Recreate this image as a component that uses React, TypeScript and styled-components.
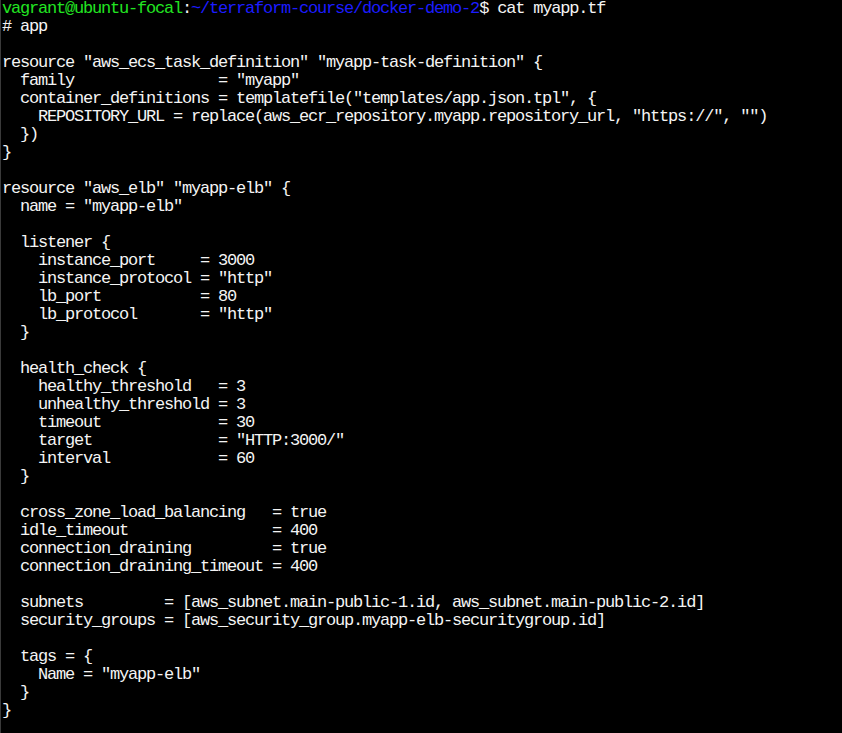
import React from "react";
import styled, { createGlobalStyle } from "styled-components";

const Global = createGlobalStyle`
  html, body { margin: 0; padding: 0; background: #000; }
  #root { min-height: 733px; background: #000; }
`;

const Terminal = styled.div`
  box-sizing: border-box;
  width: 842px;
  height: 733px;
  background: #000;
  border-left: 1px solid #3a3a3a;
  padding: 0 0 0 1px;
  overflow: hidden;
  font-family: "Liberation Mono", "DejaVu Sans Mono", monospace;
  font-size: 17px;
  letter-spacing: -1.2px;
  line-height: 18px;
  color: #f4f4f4;
`;

const Line = styled.div`
  height: 18px;
  white-space: pre;
`;

const Seg = styled.span<{ $tone: "user" | "path" }>`
  color: ${(p) => (p.$tone === "user" ? "#22e422" : "#1c1cff")};
`;

const code = `# app

resource "aws_ecs_task_definition" "myapp-task-definition" {
  family                = "myapp"
  container_definitions = templatefile("templates/app.json.tpl", {
    REPOSITORY_URL = replace(aws_ecr_repository.myapp.repository_url, "https://", "")
  })
}

resource "aws_elb" "myapp-elb" {
  name = "myapp-elb"

  listener {
    instance_port     = 3000
    instance_protocol = "http"
    lb_port           = 80
    lb_protocol       = "http"
  }

  health_check {
    healthy_threshold   = 3
    unhealthy_threshold = 3
    timeout             = 30
    target              = "HTTP:3000/"
    interval            = 60
  }

  cross_zone_load_balancing   = true
  idle_timeout                = 400
  connection_draining         = true
  connection_draining_timeout = 400

  subnets         = [aws_subnet.main-public-1.id, aws_subnet.main-public-2.id]
  security_groups = [aws_security_group.myapp-elb-securitygroup.id]

  tags = {
    Name = "myapp-elb"
  }
}`;

export default function App() {
  const lines = code.split("\n");
  return (
    <>
      <Global />
      <Terminal>
        <Line>
          <Seg $tone="user">vagrant@ubuntu-focal</Seg>:
          <Seg $tone="path">~/terraform-course/docker-demo-2</Seg>$ cat myapp.tf
        </Line>
        {lines.map((l, i) => (
          <Line key={i}>{l}</Line>
        ))}
      </Terminal>
    </>
  );
}
